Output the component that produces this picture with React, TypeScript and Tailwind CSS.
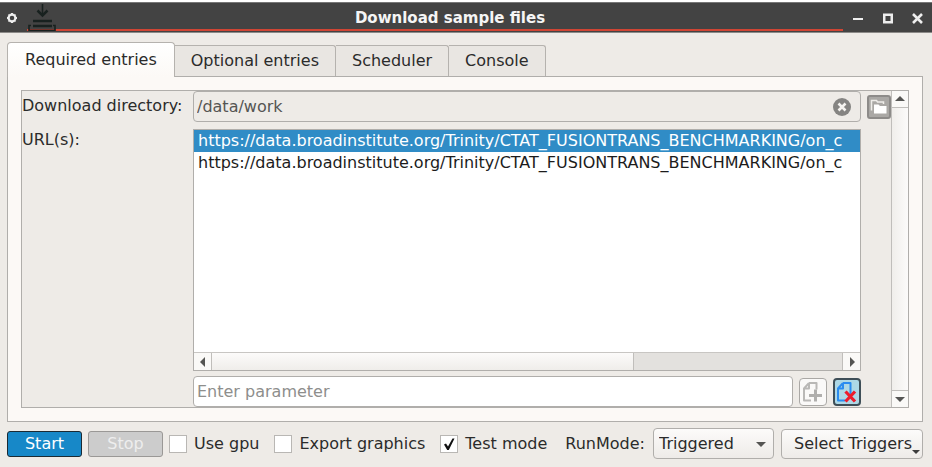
import { useState } from "react";

const tabs = ["Required entries", "Optional entries", "Scheduler", "Console"];

const urls = [
  { id: 1, text: "https://data.broadinstitute.org/Trinity/CTAT_FUSIONTRANS_BENCHMARKING/on_c" },
  { id: 2, text: "https://data.broadinstitute.org/Trinity/CTAT_FUSIONTRANS_BENCHMARKING/on_c" },
];

function Arrow({ direction }: { direction: "up" | "down" | "left" | "right" }) {
  const paths = {
    up: "M0 7 L5 2 L10 7 Z",
    down: "M0 3 L5 8 L10 3 Z",
    left: "M7 0 L2 5 L7 10 Z",
    right: "M3 0 L8 5 L3 10 Z",
  };
  return (
    <svg viewBox="0 0 10 10" className="size-[10px] shrink-0 fill-[#555553]" aria-hidden="true">
      <path d={paths[direction]} />
    </svg>
  );
}

function DownloadIcon() {
  return (
    <svg viewBox="0 0 30 28" className="h-[28px] w-[30px] shrink-0" fill="none" stroke="#18211f" aria-hidden="true">
      <path d="M15.500 1V12" strokeWidth="1.600" />
      <path d="M10.500 7.500L15.500 12.500L20.500 7.500" strokeWidth="2.500" />
      <path d="M6 18H25M6 23H25" strokeWidth="2.500" />
      <path d="M4 22.500H2V27.200H28V22.500H26" strokeWidth="1.600" />
    </svg>
  );
}

function TitleBar() {
  return (
    <header className="mt-[2px] flex h-[31px] border-t border-b border-t-[#777] border-b-[#8c8a88] bg-[#434343] text-[#f5f5f5]">
      <button aria-label="Window menu" className="flex w-[27px] items-center justify-center pr-[3px]">
        <svg viewBox="0 0 12 12" className="size-[12px]" fill="none" stroke="#eeeeee" aria-hidden="true">
          <circle cx="6" cy="6" r="3.400" strokeWidth="2.200" />
          <path d="M6 1V2M6 10V11M1 6H2M10 6H11M2.500 2.500L3 3M9 9L9.500 9.500M9.500 2.500L9 3M3 9L2.500 9.500" strokeWidth="2" />
        </svg>
      </button>
      <div className="mb-px flex flex-1 items-start border-b-2 border-[#d04534]">
        <div className="h-[26px] w-[30px]">
          <DownloadIcon />
        </div>
        <h1 className="flex-1 text-center text-[15px] leading-[31px] font-bold">Download sample files</h1>
      </div>
      <div className="flex w-[89px]">
        <button aria-label="Minimize" className="flex flex-1 items-center justify-center">
          <svg viewBox="0 0 12 12" className="size-[12px]" aria-hidden="true">
            <path d="M1 7H11" stroke="#eeeeee" strokeWidth="2" />
          </svg>
        </button>
        <button aria-label="Maximize" className="flex flex-1 items-center justify-center">
          <svg viewBox="0 0 12 12" className="size-[12px]" aria-hidden="true">
            <rect x="2.250" y="2.750" width="7.500" height="7.500" fill="none" stroke="#eeeeee" strokeWidth="2.500" />
          </svg>
        </button>
        <button aria-label="Close" className="flex flex-1 items-center justify-center">
          <svg viewBox="0 0 12 12" className="size-[12px]" aria-hidden="true">
            <path d="M2 2L11 11M11 2L2 11" stroke="#eeeeee" strokeWidth="2.600" />
          </svg>
        </button>
      </div>
    </header>
  );
}

function PageIcon({ color }: { color: string }) {
  return (
    <path
      d="M9 4H16.500V15M9 4L4 9.500V21.500H11M9 4V9.500H4"
      fill="none"
      stroke={color}
      strokeWidth="2"
      strokeLinejoin="round"
    />
  );
}

function CheckField({ label, defaultChecked = false }: { label: string; defaultChecked?: boolean }) {
  return (
    <label className="flex items-center gap-[7px] whitespace-nowrap">
      <span className="grid">
        <input
          type="checkbox"
          defaultChecked={defaultChecked}
          className="peer col-start-1 row-start-1 size-[18px] appearance-none border border-[#b9b7b4] bg-white"
        />
        <svg
          viewBox="0 0 18 18"
          className="pointer-events-none invisible col-start-1 row-start-1 size-[18px] peer-checked:visible"
          aria-hidden="true"
        >
          <path d="M4 9.500L6 8.500L8 11.500L12.500 3.500L14.500 3.500L8.800 15H7.200Z" fill="#111111" />
        </svg>
      </span>
      {label}
    </label>
  );
}

export default function App() {
  const [activeTab, setActiveTab] = useState(0);
  const [selected, setSelected] = useState(1);

  return (
    <div className="flow-root min-h-screen bg-[#eeebe7] font-['DejaVu_Sans',sans-serif] text-[16px] leading-[22px] text-[#2b2b2b] shadow-[inset_0_2px_0_#ffffff]">
      <TitleBar />
      <main className="pt-[9px] pr-[9px] pl-[7px]">
        <div role="tablist" className="flex items-end">
          {tabs.map((tab, i) => (
            <button
              key={tab}
              role="tab"
              aria-selected={i === activeTab}
              onClick={() => setActiveTab(i)}
              className={
                i === activeTab
                  ? "z-10 -mb-px h-[35px] rounded-t-[4px] border border-b-0 border-[#b5b2ae] bg-linear-to-b from-white to-[#fcf9f6] px-[17px]"
                  : "h-[31px] rounded-tr-[3px] border-t border-r border-[#b5b2ae] bg-[#e9e6e2] px-[16px]"
              }
            >
              {tab}
            </button>
          ))}
        </div>

        <section role="tabpanel" aria-label={tabs[activeTab]} className="border border-[#b0aeab] bg-[#fcf9f6] p-[13px]">
          <div className="flex border border-[#b0aeab] bg-[#eeebe7]">
            <div className="grid flex-1 grid-cols-[171px_minmax(0,1fr)]">
              <label htmlFor="directory" className="pt-[4px] whitespace-nowrap">
                Download directory:
              </label>
              <div className="flex items-center gap-[6px]">
                <div className="flex h-[31px] flex-1 items-center rounded-[4px] border border-[#b0aeab] pr-[9px] pl-[3px]">
                  <input
                    id="directory"
                    defaultValue="/data/work"
                    className="min-w-0 flex-1 bg-transparent text-[#555553] outline-none"
                  />
                  <button aria-label="Clear directory">
                    <svg viewBox="0 0 18 18" className="size-[18px]" aria-hidden="true">
                      <circle cx="9" cy="9" r="9" fill="#858482" />
                      <path d="M5.500 5.500L12.500 12.500M12.500 5.500L5.500 12.500" stroke="#f5f3f0" strokeWidth="2.600" />
                    </svg>
                  </button>
                </div>
                <button
                  aria-label="Browse"
                  className="flex size-[24px] items-center justify-center rounded-[3px] border-2 border-[#8d8b89] bg-[#aaa8a5]"
                >
                  <svg viewBox="0 0 18 18" className="size-[18px] shrink-0" aria-hidden="true">
                    <path d="M1.500 12.500V2.500H6.500L7.500 4H13.500V6" fill="none" stroke="#efedea" strokeWidth="1.500" />
                    <path d="M4 15.500V6.500H8.500L10 8H16.500V15.500Z" fill="#ffffff" />
                  </svg>
                </button>
              </div>

              <span id="urls-label" className="pt-[7px]">
                URL(s):
              </span>
              <div className="mr-[30px] pt-[7px]">
                <div className="border border-[#b0aeab] bg-white">
                  <ul role="listbox" aria-labelledby="urls-label" className="h-[222px] overflow-hidden text-[#1c1c1c]">
                    {urls.map((url) => (
                      <li
                        key={url.id}
                        role="option"
                        aria-selected={selected === url.id}
                        onClick={() => setSelected(url.id)}
                        className={
                          selected === url.id
                            ? "overflow-hidden bg-[#308cc6] pl-[4px] whitespace-nowrap text-white"
                            : "overflow-hidden pl-[4px] whitespace-nowrap"
                        }
                      >
                        {url.text}
                      </li>
                    ))}
                  </ul>
                  <div className="flex h-[18px] border-t border-[#c8c6c3] bg-[#e3e1de]">
                    <button aria-label="Scroll left" className="flex w-[18px] items-center justify-center border-r border-[#c0bebb] bg-[#faf9f7]">
                      <Arrow direction="left" />
                    </button>
                    <div className="flex-1">
                      <div className="h-full w-[67%] border-r border-[#c0bebb] bg-linear-to-b from-[#fcfbfa] to-[#efedea]" />
                    </div>
                    <button aria-label="Scroll right" className="flex w-[18px] items-center justify-center border-l border-[#c0bebb] bg-[#faf9f7]">
                      <Arrow direction="right" />
                    </button>
                  </div>
                </div>
              </div>

              <div className="col-start-2 mr-[30px] flex items-center gap-[6px] pt-[5px]">
                <input
                  aria-label="Enter parameter"
                  placeholder="Enter parameter"
                  className="h-[31px] min-w-0 flex-1 rounded-[4px] border border-[#b0aeab] bg-white pl-[3px] outline-none placeholder:text-[#8e8e8c]"
                />
                <button aria-label="Add parameter" className="size-[28px] rounded-[4px] border border-[#aaa8a5] bg-[#faf9f8]">
                  <svg viewBox="0 0 26 26" className="size-[26px]" aria-hidden="true">
                    <PageIcon color="#b9b8b6" />
                    <path d="M9 16.500H22M15.500 10.500V22.500" stroke="#faf9f8" strokeWidth="5" />
                    <path d="M9 16.500H22M15.500 10.500V22.500" stroke="#b0afad" strokeWidth="3" />
                  </svg>
                </button>
                <button aria-label="Remove parameter" className="size-[28px] rounded-[4px] border-2 border-[#3e4e57] bg-[#add8e6]">
                  <svg viewBox="1 1 24 24" className="size-[24px]" aria-hidden="true">
                    <PageIcon color="#2a8cf0" />
                    <path d="M11.500 12.500L21 22.500M21 12.500L11.500 22.500" stroke="#ed1c2b" strokeWidth="3.200" />
                  </svg>
                </button>
              </div>
            </div>

            <div className="flex w-[17px] shrink-0 flex-col border-l border-[#c0bebb] bg-linear-to-r from-[#f0eeeb] to-[#fcfbfa]">
              <button aria-label="Scroll up" className="flex h-[17px] items-center justify-center border-b border-[#c0bebb] bg-[#faf9f7]">
                <Arrow direction="up" />
              </button>
              <div className="flex-1" />
              <button aria-label="Scroll down" className="flex h-[17px] items-center justify-center border-t border-[#c0bebb] bg-[#faf9f7]">
                <Arrow direction="down" />
              </button>
            </div>
          </div>
        </section>

        <footer className="flex items-center pt-[6px]">
          <button className="h-[26px] w-[75px] rounded-[3px] border border-[#1b2a33] bg-[#1788c8] text-white">Start</button>
          <button disabled className="ml-[6px] h-[26px] w-[75px] rounded-[3px] border border-[#9a9896] bg-[#cccccc] text-[#eeeeee]">
            Stop
          </button>
          <div className="ml-[6px] flex gap-[15px]">
            <CheckField label="Use gpu" />
            <CheckField label="Export graphics" />
            <CheckField label="Test mode" defaultChecked />
          </div>
          <label htmlFor="run-mode" className="ml-[18px]">
            RunMode:
          </label>
          <div className="ml-auto grid w-[121px] items-center">
            <select
              id="run-mode"
              className="col-start-1 row-start-1 h-[31px] appearance-none rounded-[4px] border border-[#b0aeab] bg-linear-to-b from-[#fcfbfa] to-[#eeebe8] pl-[5px]"
            >
              <option>Triggered</option>
              <option>Manual</option>
              <option>Automatic</option>
            </select>
            <span className="pointer-events-none col-start-1 row-start-1 mr-[8px] justify-self-end">
              <Arrow direction="down" />
            </span>
          </div>
          <button className="ml-[7px] flex h-[30px] w-[142px] items-center justify-end rounded-[4px] border border-[#b0aeab] bg-linear-to-b from-[#fcfbfa] to-[#eeebe8] pr-[2px] whitespace-nowrap">
            Select Triggers
            <svg viewBox="0 0 8 4" className="mb-[4px] h-[4px] w-[8px] self-end fill-[#3c3c3c]" aria-hidden="true">
              <path d="M0 0H8L4 4Z" />
            </svg>
          </button>
        </footer>
      </main>
    </div>
  );
}
